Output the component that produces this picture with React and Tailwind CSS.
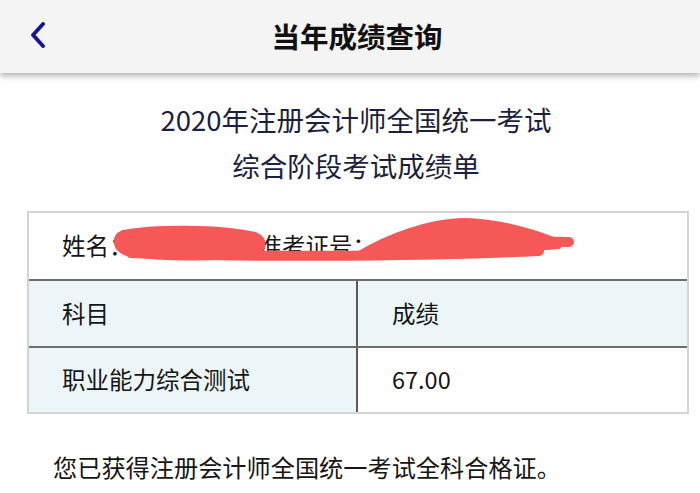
import React from 'react';

const font = { fontFamily: '"Noto Sans CJK SC", "Noto Sans", sans-serif' };

// red marker scribble over the personal info
const Scribble = () => (
  <svg
    className="absolute left-0 top-0 pointer-events-none"
    width="700"
    height="66"
    viewBox="0 0 700 66"
  >
    <g fill="#f65858" stroke="#f65858" strokeLinecap="round" strokeLinejoin="round">
      <path d="M94 20 C125 14 190 14 226 22 C236 26 236 36 226 40 C190 46 135 46 98 40 C86 36 84 24 94 20 Z" strokeWidth="6" />
      <path d="M102 40 C200 44 380 44 510 38" strokeWidth="10" fill="none" />
      <path d="M330 40 C360 22 400 8 432 7 C470 7 505 18 530 28 L530 34 C480 38 400 41 330 42 Z" strokeWidth="4" />
      <path d="M470 28 L540 29" strokeWidth="10" fill="none" />
    </g>
  </svg>
);

const App = () => {
  return (
    <div className="w-[700px] h-[493px] bg-white overflow-hidden" style={font}>
      <header className="relative h-[73px] bg-[#f4f4f4] flex items-center justify-center shadow-[0_3px_6px_rgba(0,0,0,0.3)] z-10">
        <svg className="absolute left-[29px] top-[22px]" width="18" height="26" viewBox="0 0 18 26">
          <path d="M14 2 L4 13 L14 24" stroke="#14149a" strokeWidth="3.8" fill="none" strokeLinecap="round" strokeLinejoin="round" />
        </svg>
        <h1 className="ml-[14px] text-[28.5px] font-bold text-[#111] leading-none">当年成绩查询</h1>
      </header>

      <div className="mt-[23px] pl-[12px] text-center text-[27.5px] leading-[46px] text-[#1c1f3f]">
        <p>2020年注册会计师全国统一考试</p>
        <p>综合阶段考试成绩单</p>
      </div>

      <div className="mt-[23px] ml-[27px] w-[662px] border-2 border-[#d4d4d4] text-[23.5px] text-[#151515]">
        <div className="relative h-[66px] flex items-center pl-[33px] bg-white">
          <span>姓名：</span>
          <span className="ml-[126px]">准考证号：</span>
          <Scribble />
        </div>
        <div className="grid grid-cols-[329px_1fr] border-t-2 border-[#6e6e6e] bg-[#ecf6f8]">
          <div className="h-[65px] flex items-center pl-[33px] border-r-2 border-[#5a5a5a]">科目</div>
          <div className="h-[65px] flex items-center pl-[34px]">成绩</div>
        </div>
        <div className="grid grid-cols-[329px_1fr] border-t-2 border-[#6e6e6e]">
          <div className="h-[64px] flex items-center pl-[33px] border-r-2 border-[#5a5a5a] bg-[#ecf6f8]">职业能力综合测试</div>
          <div className="h-[64px] flex items-center pl-[34px] bg-white">67.00</div>
        </div>
      </div>

      <p className="mt-[37px] ml-[53px] text-[24.2px] leading-[32px] text-[#151515]">
        您已获得注册会计师全国统一考试全科合格证。
      </p>
    </div>
  );
};

export default App;
